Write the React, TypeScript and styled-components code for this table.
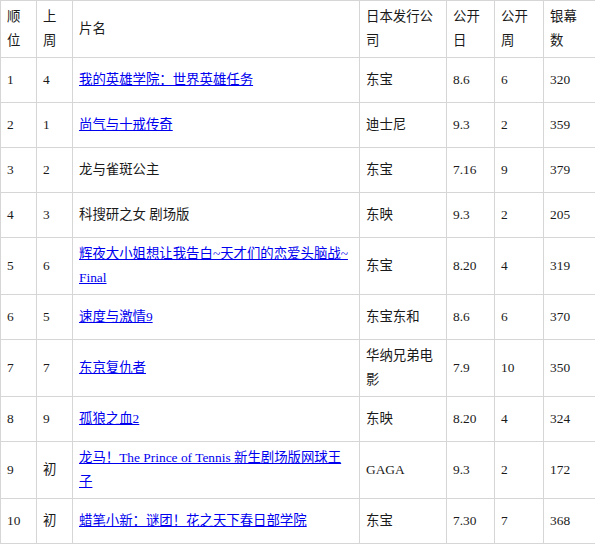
import styled, { createGlobalStyle } from "styled-components";

const GlobalStyle = createGlobalStyle`
  html, body {
    margin: 0;
    padding: 0;
    background: #ffffff;
  }
`;

type Movie = {
  rank: string;
  last: string;
  title: string;
  link: boolean;
  company: string;
  date: string;
  weeks: string;
  screens: string;
};

const MOVIES: Movie[] = [
  { rank: "1", last: "4", title: "我的英雄学院：世界英雄任务", link: true, company: "东宝", date: "8.6", weeks: "6", screens: "320" },
  { rank: "2", last: "1", title: "尚气与十戒传奇", link: true, company: "迪士尼", date: "9.3", weeks: "2", screens: "359" },
  { rank: "3", last: "2", title: "龙与雀斑公主", link: false, company: "东宝", date: "7.16", weeks: "9", screens: "379" },
  { rank: "4", last: "3", title: "科搜研之女 剧场版", link: false, company: "东映", date: "9.3", weeks: "2", screens: "205" },
  { rank: "5", last: "6", title: "辉夜大小姐想让我告白~天才们的恋爱头脑战~Final", link: true, company: "东宝", date: "8.20", weeks: "4", screens: "319" },
  { rank: "6", last: "5", title: "速度与激情9", link: true, company: "东宝东和", date: "8.6", weeks: "6", screens: "370" },
  { rank: "7", last: "7", title: "东京复仇者", link: true, company: "华纳兄弟电影", date: "7.9", weeks: "10", screens: "350" },
  { rank: "8", last: "9", title: "孤狼之血2", link: true, company: "东映", date: "8.20", weeks: "4", screens: "324" },
  { rank: "9", last: "初", title: "龙马！The Prince of Tennis 新生剧场版网球王子", link: true, company: "GAGA", date: "9.3", weeks: "2", screens: "172" },
  { rank: "10", last: "初", title: "蜡笔小新：谜团！花之天下春日部学院", link: true, company: "东宝", date: "7.30", weeks: "7", screens: "368" },
];

const COLUMNS = [36, 36, 287, 87, 48, 49, 52];

const Table = styled.table`
  width: 595px;
  table-layout: fixed;
  border-collapse: collapse;
  font-family: "Liberation Serif", "Noto Sans CJK SC", serif;
  font-size: 13.4px;
  line-height: 24px;
  color: #1a1a1a;
`;

const Row = styled.tr`
  height: 45px;
`;

const Cell = styled.td`
  border: 1px solid #d6d6d6;
  padding: 4px 6px;
  vertical-align: middle;
  text-align: left;
  font-weight: normal;
  word-break: break-all;
`;

const HeadCell = styled(Cell).attrs({ as: "th" })`
  padding: 4px 6px;
`;

const TitleLink = styled.a`
  color: #0000ee;
  text-decoration: underline;
`;

export default function App() {
  return (
    <>
      <GlobalStyle />
      <Table>
        <colgroup>
          {COLUMNS.map((w, i) => (
            <col key={i} style={{ width: w }} />
          ))}
        </colgroup>
        <thead>
          <Row>
            <HeadCell>顺位</HeadCell>
            <HeadCell>上周</HeadCell>
            <HeadCell>片名</HeadCell>
            <HeadCell>日本发行公司</HeadCell>
            <HeadCell>公开日</HeadCell>
            <HeadCell>公开周</HeadCell>
            <HeadCell>银幕数</HeadCell>
          </Row>
        </thead>
        <tbody>
          {MOVIES.map((m) => (
            <Row key={m.rank}>
              <Cell>{m.rank}</Cell>
              <Cell>{m.last}</Cell>
              <Cell>{m.link ? <TitleLink href="#">{m.title}</TitleLink> : m.title}</Cell>
              <Cell>{m.company}</Cell>
              <Cell>{m.date}</Cell>
              <Cell>{m.weeks}</Cell>
              <Cell>{m.screens}</Cell>
            </Row>
          ))}
        </tbody>
      </Table>
    </>
  );
}
